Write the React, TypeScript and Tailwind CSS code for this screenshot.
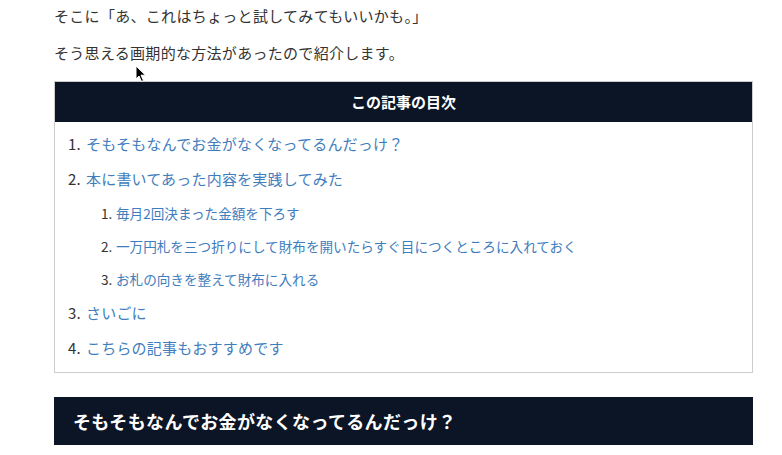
const tocItems = [
  { text: 'そもそもなんでお金がなくなってるんだっけ？', children: [] as string[] },
  {
    text: '本に書いてあった内容を実践してみた',
    children: [
      '毎月2回決まった金額を下ろす',
      '一万円札を三つ折りにして財布を開いたらすぐ目につくところに入れておく',
      'お札の向きを整えて財布に入れる',
    ],
  },
  { text: 'さいごに', children: [] as string[] },
  { text: 'こちらの記事もおすすめです', children: [] as string[] },
];

function Cursor() {
  return (
    <svg className="absolute left-[135px] top-[63px]" width="12" height="18" viewBox="0 0 12 18">
      <path d="M1 1 L1 14 L4 11 L6.5 16.5 L8.5 15.5 L6 10.2 L10.5 10.2 Z" fill="#000" stroke="#fff" strokeWidth="1" />
    </svg>
  );
}

export default function App() {
  return (
    <div
      className="relative min-h-screen bg-white text-[#333]"
      style={{ fontFamily: '"Noto Sans CJK JP", "Noto Sans", sans-serif' }}
    >
      <div className="ml-[54px] w-[699px]">
        <p className="mt-[2px] text-[15px] leading-[27px] tracking-[0.02em]">そこに「あ、これはちょっと試してみてもいいかも。」</p>
        <p className="mt-[10px] text-[15px] leading-[27px] tracking-[0.02em]">そう思える画期的な方法があったので紹介します。</p>

        <div className="mt-[15px] border border-[#cccccc]">
          <div className="flex h-[40px] items-center justify-center bg-[#0b1526] text-[15px] font-bold text-white">
            この記事の目次
          </div>
          <ol className="pl-[13px] pt-[5px] pb-[6px]">
            {tocItems.map((item, idx) => (
              <li key={idx}>
                <div className="flex h-[35px] items-center text-[15px] tracking-[0.2px]">
                  <span className="w-[18px] text-[#333]">{idx + 1}.</span>
                  <a className="text-[#3f7dbd]">{item.text}</a>
                </div>
                {item.children.length > 0 && (
                  <ol className="pl-[33px]">
                    {item.children.map((child, cIdx) => (
                      <li key={cIdx} className="flex h-[33px] items-center text-[13.6px]">
                        <span className="w-[15px] text-[#333]">{cIdx + 1}.</span>
                        <a className="text-[#3f7dbd]">{child}</a>
                      </li>
                    ))}
                  </ol>
                )}
              </li>
            ))}
          </ol>
        </div>

        <h2 className="mt-[24px] flex h-[48px] items-center bg-[#0b1526] pl-[19px] text-[18px] font-bold tracking-[0.02em] text-white">
          そもそもなんでお金がなくなってるんだっけ？
        </h2>
      </div>
      <Cursor />
    </div>
  );
}
